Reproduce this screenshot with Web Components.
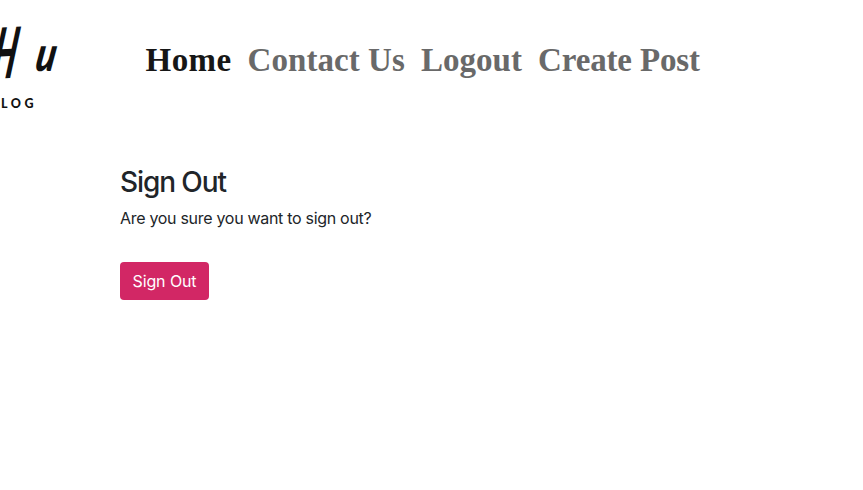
<!DOCTYPE html>
<html lang="en">
<head>
<meta charset="utf-8">
<title>Sign Out</title>
<style>
body{margin:0;background:#fff;color:#212529;font:400 16px/24px Inter,sans-serif;overflow:hidden}
</style>
</head>
<body>
<blog-page></blog-page>
<script>
const define=(name,html)=>customElements.define(name,class extends HTMLElement{
  constructor(){super();this.attachShadow({mode:'open'}).innerHTML=html;}
});
define('brand-logo',`<style>
:host{display:block;width:120px;height:120px;flex:none;color:#111}
svg{display:block}
</style>
<svg width="120" height="120" viewBox="0 0 120 120" fill="#111">
<text font-family="Lato,sans-serif" font-weight="900" font-style="italic" font-size="70" transform="translate(-10 79) rotate(-3) skewX(-12) scale(.47 1)">H</text>
<text font-family="Lato,sans-serif" font-weight="900" font-style="italic" font-size="48" transform="translate(34 71) skewX(-10) scale(.76 1)">u</text>
<text x="1" y="107.5" font-family="Lato,sans-serif" font-weight="900" font-size="12.5" letter-spacing="3.5">LOG</text>
</svg>`);
define('nav-link',`<style>
:host{display:block;padding:0 8px;color:#696969;font:700 33px/48px 'Liberation Serif',serif;white-space:nowrap;letter-spacing:var(--track,0)}
:host([active]){color:#161616}
</style><slot></slot>`);
define('site-header',`<style>
:host{display:flex;height:120px}
nav{display:flex;align-items:center;padding-left:17.6px}
</style>
<brand-logo></brand-logo>
<nav><slot></slot></nav>`);
define('action-button',`<style>
:host{display:block}
button{display:block;width:89px;height:38px;padding:0;border:0;border-radius:4px;background:#d22765;color:#fff;font:inherit;letter-spacing:-.1px}
</style><button><slot></slot></button>`);
define('sign-out-panel',`<style>
:host{display:block;padding:45px 0 0 120px}
h1{margin:0 0 7px;font-size:28px;line-height:35px;font-weight:500;letter-spacing:-1.1px}
p{margin:0 0 32px;line-height:23px;letter-spacing:-.3px}
</style>
<h1>Sign Out</h1><p>Are you sure you want to sign out?</p><action-button>Sign Out</action-button>`);
define('blog-page',`<style>:host{display:block;height:490px}
.a{width:86px;--track:.4px}.b{width:157.5px;--track:.05px}.c{width:101px}.d{width:162px;--track:-.15px}</style>
<site-header><nav-link class="a" active>Home</nav-link><nav-link class="b">Contact Us</nav-link><nav-link class="c">Logout</nav-link><nav-link class="d">Create Post</nav-link></site-header>
<sign-out-panel></sign-out-panel>`);
</script>
</body>
</html>
